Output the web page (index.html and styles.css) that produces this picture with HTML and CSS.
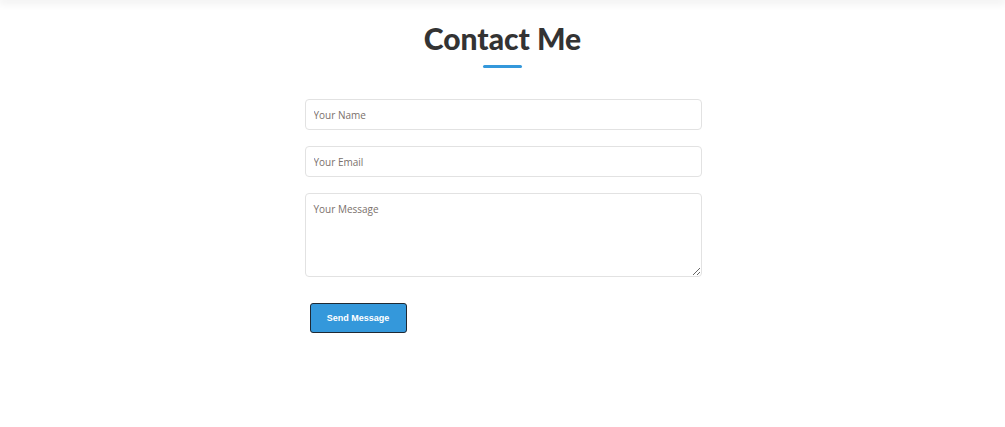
FILE: index.html
```html
<!doctype html>
<html>
  <head>
    <title>Contact Me</title>
    <link rel="stylesheet" href="styles.css">
  </head>
  <body>
    <div class="topbar"></div>

    <section class="contact">
      <h2 class="section-title">Contact Me</h2>
      <div class="title-line"></div>

      <form class="contact-form">
        <input type="text" placeholder="Your Name" />
        <input type="email" placeholder="Your Email" />
        <textarea placeholder="Your Message"></textarea>
        <button type="button" class="send-btn">Send Message</button>
      </form>
    </section>
  </body>
</html>
```

FILE: styles.css
```css
body {
  margin: 0;
  background: white;
  font-family: Lato, "Open Sans", sans-serif;
  color: #333;
}
.topbar {
  height: 0;
  box-shadow: 0 0 10px 2px rgba(0, 0, 0, 0.12);
}
.contact {
  display: flex;
  flex-direction: column;
  align-items: center;
  padding-top: 18px;
}
.section-title {
  margin: 0;
  font-size: 30px;
  font-weight: 900;
  color: #333;
  line-height: 40px;
}
.title-line {
  width: 39px;
  height: 3px;
  background-color: #3498db;
  border-radius: 2px;
  margin-top: 7px;
}
.contact-form {
  width: 397px;
  display: flex;
  flex-direction: column;
  gap: 16px;
  margin-top: 31px;
  margin-left: 1px;
}
.contact-form input,
.contact-form textarea {
  box-sizing: border-box;
  width: 100%;
  border: 1px solid #e2e2e2;
  border-radius: 4px;
  padding: 8px 8px;
  font-family: "Open Sans", sans-serif;
  font-size: 10px;
  color: #333;
}
.contact-form input {
  height: 31px;
}
.contact-form textarea {
  height: 84px;
  resize: vertical;
}
.contact-form ::placeholder {
  color: #7a706b;
}
.send-btn {
  align-self: flex-start;
  margin: 10px 0 0 5px;
  width: 97px;
  height: 30px;
  background-color: #3498db;
  color: white;
  border: 1px solid #1f2933;
  border-radius: 3px;
  font-family: "Liberation Sans", Arial, sans-serif;
  font-size: 9px;
  font-weight: bold;
  cursor: pointer;
}
```
